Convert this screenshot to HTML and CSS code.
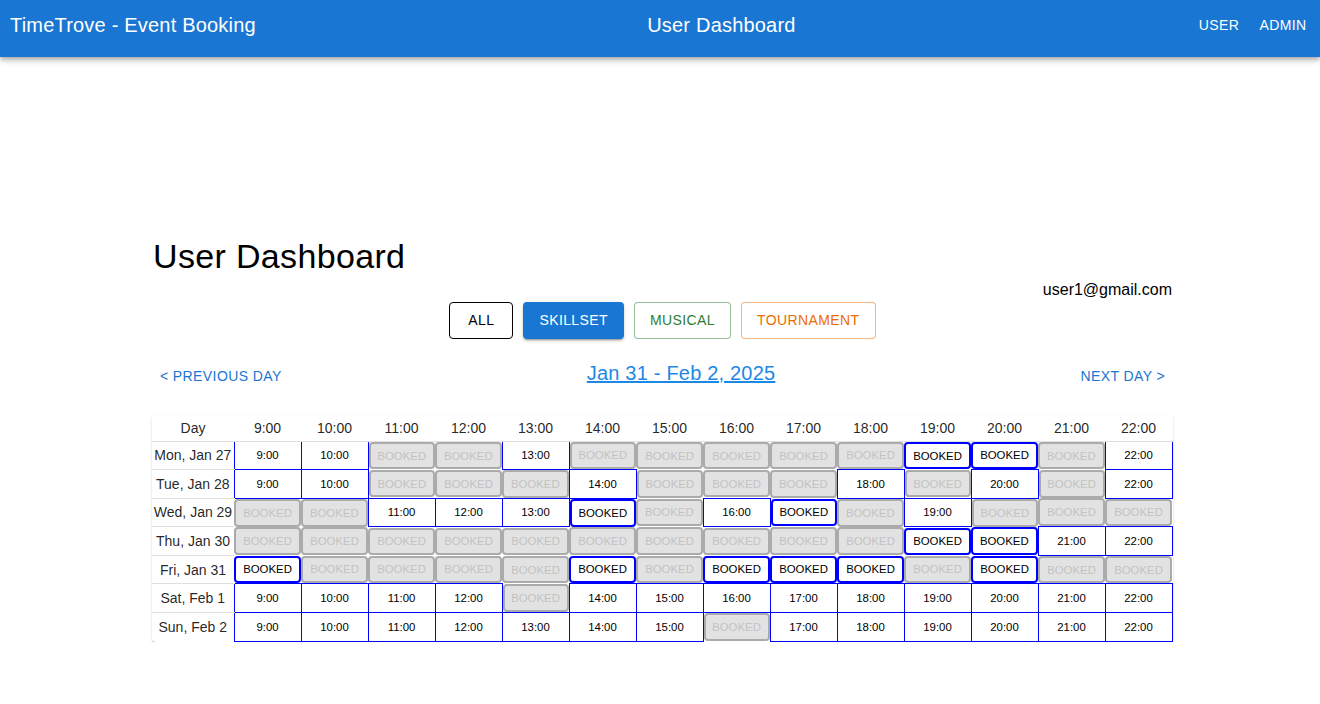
FILE: index.html
```html
<!DOCTYPE html>
<html lang="en">
<head>
<meta charset="utf-8">
<title>TimeTrove - Event Booking</title>
<link rel="stylesheet" href="styles.css">
</head>
<body>
<header class="appbar">
  <div class="brand">TimeTrove - Event Booking</div>
  <div class="page-title">User Dashboard</div>
  <nav class="nav">
    <button class="nav-btn">User</button>
    <button class="nav-btn">Admin</button>
  </nav>
</header>

<main class="main">
  <h1 class="title">User Dashboard</h1>
  <div class="email">user1@gmail.com</div>

  <div class="filters">
    <button class="fbtn f-all">All</button>
    <button class="fbtn f-skill">Skillset</button>
    <button class="fbtn f-music">Musical</button>
    <button class="fbtn f-tour">Tournament</button>
  </div>

  <div class="daynav">
    <button class="text-btn">&lt; Previous Day</button>
    <a class="range" href="#">Jan 31 - Feb 2, 2025</a>
    <button class="text-btn">Next Day &gt;</button>
  </div>

  <div class="paper">
    <table class="grid">
      <colgroup>
        <col class="c-day">
        <col><col><col><col><col><col><col><col><col><col><col><col><col><col>
      </colgroup>
      <thead>
        <tr>
          <th>Day</th><th>9:00</th><th>10:00</th><th>11:00</th><th>12:00</th><th>13:00</th><th>14:00</th><th>15:00</th><th>16:00</th><th>17:00</th><th>18:00</th><th>19:00</th><th>20:00</th><th>21:00</th><th>22:00</th>
        </tr>
      </thead>
      <tbody>
        <tr>
          <td class="day">Mon, Jan 27</td>
          <td class="a">9:00</td>
          <td class="a">10:00</td>
          <td class="b"><span class="bk">BOOKED</span></td>
          <td class="b"><span class="bk">BOOKED</span></td>
          <td class="a">13:00</td>
          <td class="b"><span class="bk">BOOKED</span></td>
          <td class="b"><span class="bk">BOOKED</span></td>
          <td class="b"><span class="bk">BOOKED</span></td>
          <td class="b"><span class="bk">BOOKED</span></td>
          <td class="b"><span class="bk">BOOKED</span></td>
          <td class="b"><span class="mine">BOOKED</span></td>
          <td class="b"><span class="mine">BOOKED</span></td>
          <td class="b"><span class="bk">BOOKED</span></td>
          <td class="a">22:00</td>
        </tr>
        <tr>
          <td class="day">Tue, Jan 28</td>
          <td class="a">9:00</td>
          <td class="a">10:00</td>
          <td class="b"><span class="bk">BOOKED</span></td>
          <td class="b"><span class="bk">BOOKED</span></td>
          <td class="b"><span class="bk">BOOKED</span></td>
          <td class="a">14:00</td>
          <td class="b"><span class="bk">BOOKED</span></td>
          <td class="b"><span class="bk">BOOKED</span></td>
          <td class="b"><span class="bk">BOOKED</span></td>
          <td class="a">18:00</td>
          <td class="b"><span class="bk">BOOKED</span></td>
          <td class="a">20:00</td>
          <td class="b"><span class="bk">BOOKED</span></td>
          <td class="a">22:00</td>
        </tr>
        <tr>
          <td class="day">Wed, Jan 29</td>
          <td class="b"><span class="bk">BOOKED</span></td>
          <td class="b"><span class="bk">BOOKED</span></td>
          <td class="a">11:00</td>
          <td class="a">12:00</td>
          <td class="a">13:00</td>
          <td class="b"><span class="mine">BOOKED</span></td>
          <td class="b"><span class="bk">BOOKED</span></td>
          <td class="a">16:00</td>
          <td class="b"><span class="mine">BOOKED</span></td>
          <td class="b"><span class="bk">BOOKED</span></td>
          <td class="a">19:00</td>
          <td class="b"><span class="bk">BOOKED</span></td>
          <td class="b"><span class="bk">BOOKED</span></td>
          <td class="b"><span class="bk">BOOKED</span></td>
        </tr>
        <tr>
          <td class="day">Thu, Jan 30</td>
          <td class="b"><span class="bk">BOOKED</span></td>
          <td class="b"><span class="bk">BOOKED</span></td>
          <td class="b"><span class="bk">BOOKED</span></td>
          <td class="b"><span class="bk">BOOKED</span></td>
          <td class="b"><span class="bk">BOOKED</span></td>
          <td class="b"><span class="bk">BOOKED</span></td>
          <td class="b"><span class="bk">BOOKED</span></td>
          <td class="b"><span class="bk">BOOKED</span></td>
          <td class="b"><span class="bk">BOOKED</span></td>
          <td class="b"><span class="bk">BOOKED</span></td>
          <td class="b"><span class="mine">BOOKED</span></td>
          <td class="b"><span class="mine">BOOKED</span></td>
          <td class="a">21:00</td>
          <td class="a">22:00</td>
        </tr>
        <tr>
          <td class="day">Fri, Jan 31</td>
          <td class="b"><span class="mine">BOOKED</span></td>
          <td class="b"><span class="bk">BOOKED</span></td>
          <td class="b"><span class="bk">BOOKED</span></td>
          <td class="b"><span class="bk">BOOKED</span></td>
          <td class="b"><span class="bk">BOOKED</span></td>
          <td class="b"><span class="mine">BOOKED</span></td>
          <td class="b"><span class="bk">BOOKED</span></td>
          <td class="b"><span class="mine">BOOKED</span></td>
          <td class="b"><span class="mine">BOOKED</span></td>
          <td class="b"><span class="mine">BOOKED</span></td>
          <td class="b"><span class="bk">BOOKED</span></td>
          <td class="b"><span class="mine">BOOKED</span></td>
          <td class="b"><span class="bk">BOOKED</span></td>
          <td class="b"><span class="bk">BOOKED</span></td>
        </tr>
        <tr>
          <td class="day">Sat, Feb 1</td>
          <td class="a">9:00</td>
          <td class="a">10:00</td>
          <td class="a">11:00</td>
          <td class="a">12:00</td>
          <td class="b"><span class="bk">BOOKED</span></td>
          <td class="a">14:00</td>
          <td class="a">15:00</td>
          <td class="a">16:00</td>
          <td class="a">17:00</td>
          <td class="a">18:00</td>
          <td class="a">19:00</td>
          <td class="a">20:00</td>
          <td class="a">21:00</td>
          <td class="a">22:00</td>
        </tr>
        <tr>
          <td class="day">Sun, Feb 2</td>
          <td class="a">9:00</td>
          <td class="a">10:00</td>
          <td class="a">11:00</td>
          <td class="a">12:00</td>
          <td class="a">13:00</td>
          <td class="a">14:00</td>
          <td class="a">15:00</td>
          <td class="b"><span class="bk">BOOKED</span></td>
          <td class="a">17:00</td>
          <td class="a">18:00</td>
          <td class="a">19:00</td>
          <td class="a">20:00</td>
          <td class="a">21:00</td>
          <td class="a">22:00</td>
        </tr>
      </tbody>
    </table>
  </div>
</main>
</body>
</html>
```

FILE: styles.css
```css
* { box-sizing: border-box; }

html, body {
  margin: 0;
  padding: 0;
  background: #fff;
  font-family: "Liberation Sans", Arial, Helvetica, sans-serif;
  color: rgba(0, 0, 0, 0.87);
}

button {
  font-family: inherit;
  cursor: pointer;
}

/* ---------- App bar ---------- */
.appbar {
  height: 57px;
  background: #1976d2;
  color: #fff;
  display: flex;
  align-items: center;
  justify-content: space-between;
  padding: 0 5px 7px 10px;
  box-shadow: 0 2px 4px -1px rgba(0,0,0,0.2), 0 4px 5px 0 rgba(0,0,0,0.14), 0 1px 10px 0 rgba(0,0,0,0.12);
  position: relative;
  z-index: 2;
}

.brand,
.page-title {
  font-size: 20px;
  line-height: 32px;
  font-weight: 400;
  white-space: nowrap;
  letter-spacing: 0.01em;
}

.nav {
  display: flex;
}

.nav-btn {
  min-width: 64px;
  padding: 6px 8px;
  background: none;
  border: 0;
  color: #fff;
  font-size: 14px;
  line-height: 24.5px;
  letter-spacing: 0.02857em;
  text-transform: uppercase;
  font-weight: 400;
}

/* ---------- Main ---------- */
.main {
  width: 1020px;
  margin-left: 152px;
  padding-top: 178px;
}

.title {
  margin: 0 0 0 1px;
  font-size: 34px;
  line-height: 42px;
  font-weight: 400;
  letter-spacing: 0.01em;
  color: #000;
}

.email {
  text-align: right;
  font-size: 16px;
  line-height: 24px;
  padding-top: 1px;
  color: #000;
}

.filters {
  display: flex;
  justify-content: center;
  gap: 10px;
  margin-left: 1px;
}

.fbtn {
  min-width: 64px;
  height: 36.5px;
  padding: 5px 15px;
  border-radius: 4px;
  background: #fff;
  font-size: 14px;
  line-height: 24.5px;
  letter-spacing: 0.02857em;
  text-transform: uppercase;
  font-weight: 400;
}

.f-all {
  border: 1px solid #000;
  color: #000;
}

.f-skill {
  padding: 6px 16px;
  border: 0;
  background: #1976d2;
  color: #fff;
  box-shadow: 0 3px 1px -2px rgba(0,0,0,0.2), 0 2px 2px 0 rgba(0,0,0,0.14), 0 1px 5px 0 rgba(0,0,0,0.12);
}

.f-music {
  border: 1px solid rgba(46, 125, 50, 0.5);
  color: #2e7d32;
}

.f-tour {
  border: 1px solid rgba(237, 108, 2, 0.5);
  color: #ed6c02;
}

.daynav {
  display: flex;
  justify-content: space-between;
  align-items: flex-start;
  margin-top: 19px;
  margin-right: -1px;
}

.text-btn {
  min-width: 64px;
  padding: 6px 8px;
  border: 0;
  background: none;
  color: #1976d2;
  font-size: 14px;
  line-height: 24.5px;
  letter-spacing: 0.02857em;
  text-transform: uppercase;
  font-weight: 400;
}

.range {
  font-size: 20px;
  line-height: 32px;
  color: #1e88e5;
  text-decoration: underline;
  letter-spacing: 0.01em;
  margin-top: -1px;
}

/* ---------- Grid table ---------- */
.paper {
  margin-top: 21px;
  background: #fff;
  border-radius: 4px;
  box-shadow: 0 2px 1px -1px rgba(0,0,0,0.2), 0 1px 1px 0 rgba(0,0,0,0.14), 0 1px 3px 0 rgba(0,0,0,0.12);
  width: 1021px;
}

.grid {
  width: 1020px;
  table-layout: fixed;
  border-collapse: collapse;
}

.grid col { width: 67px; }
.grid col.c-day { width: 82px; }

.grid th {
  height: 26px;
  padding: 0;
  font-size: 14px;
  font-weight: 400;
  text-align: center;
  color: rgba(0, 0, 0, 0.87);
  border-bottom: 1px solid #e0e0e0;
}

.grid td {
  height: 28.57px;
  padding: 0;
  text-align: center;
  vertical-align: middle;
  font-size: 11.4px;
  color: #000;
}

.grid td.day {
  font-size: 14px;
  color: rgba(0, 0, 0, 0.87);
  border-bottom: 1px solid #e0e0e0;
  white-space: nowrap;
}

.grid tr:last-child td.day { border-bottom: 0; }

.grid td.a {
  border: 1px solid #0000ff;
  background: #fff;
}

.bk,
.mine {
  display: flex;
  align-items: center;
  justify-content: center;
  height: 27.6px;
  border-radius: 4px;
  font-size: 11.4px;
}

.bk {
  background: #e2e2e2;
  border: 2px solid #ababab;
  color: #c2c2c2;
}

.mine {
  background: #fff;
  border: 2px solid #0000ff;
  color: #000;
}
```
